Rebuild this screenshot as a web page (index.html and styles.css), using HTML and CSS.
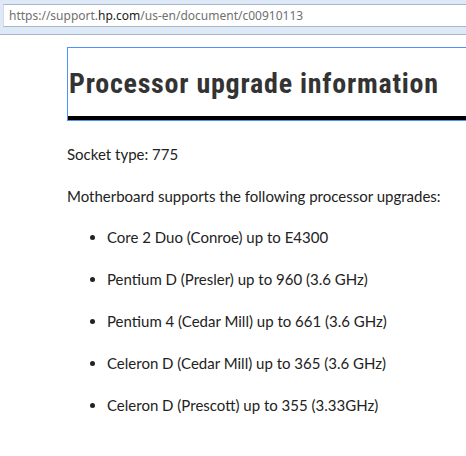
FILE: index.html
```html
<!DOCTYPE html>
<html lang="en">
<head>
  <meta charset="UTF-8">
  <title>Processor upgrade information</title>
  <link rel="stylesheet" href="styles.css">
</head>
<body>
  <div class="browser-bar">
    <div class="url-field">
      <span class="url-dim">https://support.</span><span class="url-host">hp.com</span><span class="url-dim">/us-en/document/c00910113</span>
    </div>
    <div class="bar-strip"></div>
  </div>

  <div class="content">
    <div class="title-box">
      <h1>Processor upgrade information</h1>
    </div>

    <p>Socket type: 775</p>
    <p>Motherboard supports the following processor upgrades:</p>

    <ul class="cpu-list">
      <li>Core 2 Duo (Conroe) up to E4300</li>
      <li>Pentium D (Presler) up to 960 (3.6 GHz)</li>
      <li>Pentium 4 (Cedar Mill) up to 661 (3.6 GHz)</li>
      <li>Celeron D (Cedar Mill) up to 365 (3.6 GHz)</li>
      <li>Celeron D (Prescott) up to 355 (3.33GHz)</li>
    </ul>
  </div>
</body>
</html>
```

FILE: styles.css
```css
body {
  margin: 0;
  padding: 0;
  background-color: #ffffff;
  color: #222222;
  font-family: Lato, sans-serif;
  overflow: hidden;
}

.browser-bar {
  background-color: #dde9f7;
  padding-top: 4px;
  border-bottom: 1px solid #a9b7c9;
}

.url-field {
  background-color: #ffffff;
  border-top: 1px solid #a9b7c9;
  border-bottom: 1px solid #a9b7c9;
  border-left: 1px solid #d5dbe3;
  margin-left: 3px;
  height: 21px;
  padding-left: 5px;
  font-family: "Noto Sans", sans-serif;
  font-size: 12px;
  line-height: 21px;
  white-space: nowrap;
}

.url-dim {
  color: #707070;
}

.url-host {
  color: #1a1a1a;
}

.bar-strip {
  height: 7px;
}

.content {
  margin-left: 67px;
}

.title-box {
  margin-top: 12px;
  border: 1px solid #4d90fe;
  border-right: none;
}

.title-box h1 {
  margin: 0;
  padding: 19px 0 0 1px;
  height: 49px;
  border-bottom: 4px solid #000000;
  font-family: "Liberation Sans Narrow", "Roboto Condensed", Roboto, sans-serif;
  font-size: 28px;
  line-height: 34px;
  letter-spacing: 0.75px;
  font-weight: bold;
  color: #333333;
  white-space: nowrap;
}

p {
  margin: 0 0 21px 0;
  font-size: 15px;
  line-height: 20px;
}

.content > p:first-of-type {
  margin-top: 23px;
  margin-bottom: 22px;
}

.cpu-list {
  margin: 0;
  padding-left: 40px;
}

.cpu-list li {
  font-size: 15px;
  line-height: 20px;
  margin-bottom: 22px;
}
```
